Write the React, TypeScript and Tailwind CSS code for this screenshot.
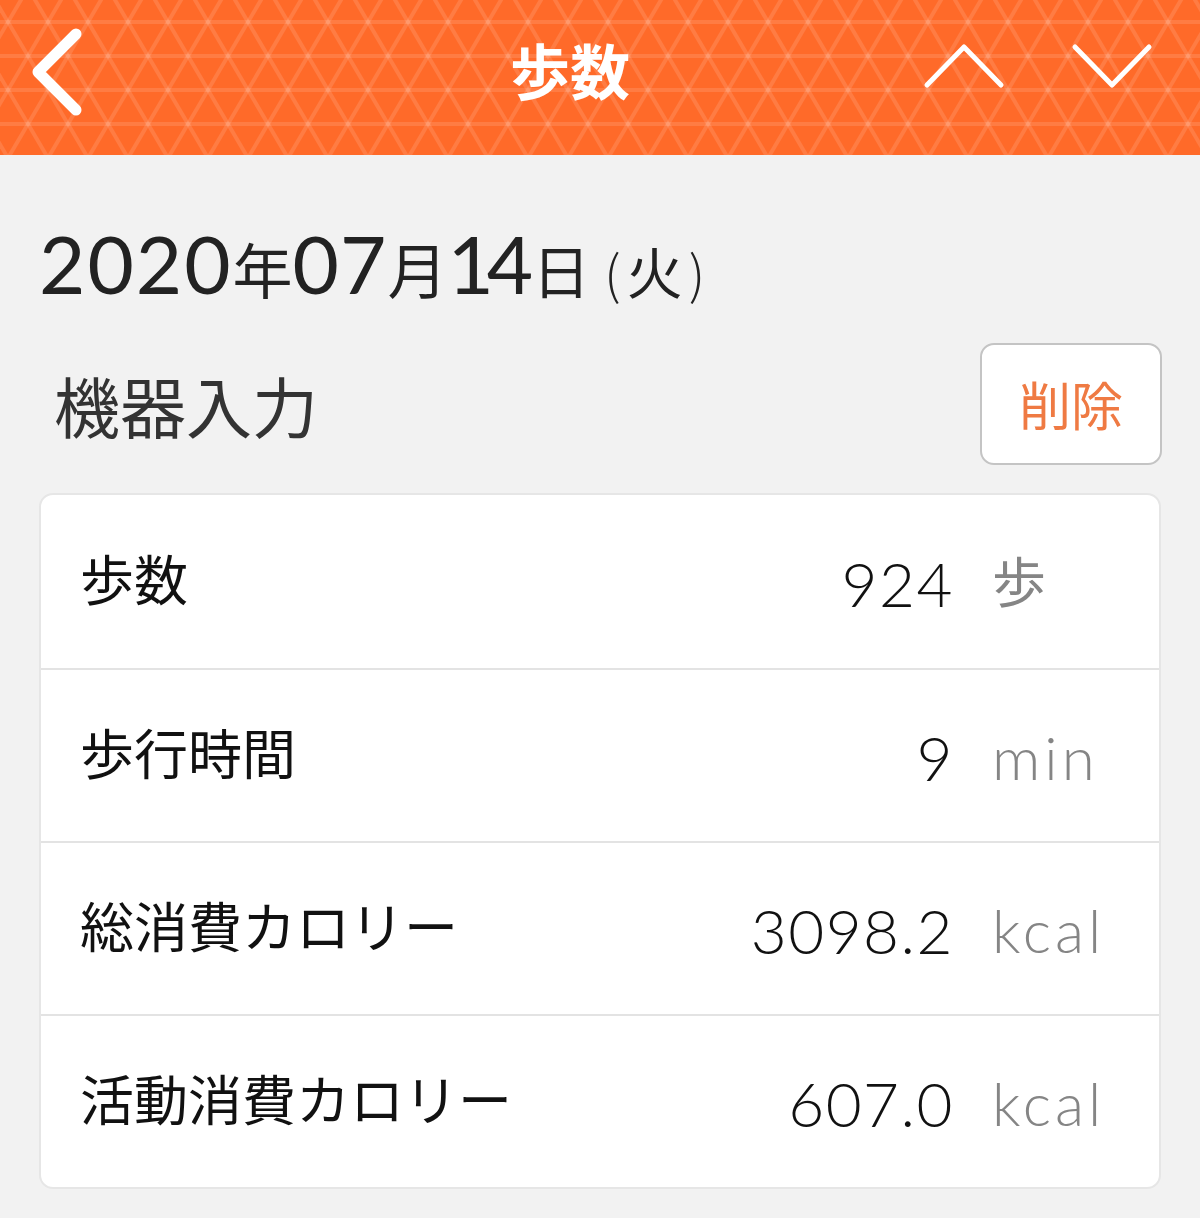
import React from "react";

function HeaderPattern() {
  const lines: React.ReactNode[] = [];
  const h = 34;
  const w = 40;
  for (let k = -1; k < 7; k++) {
    const y = 22 + h * k;
    lines.push(<line key={"h" + k} x1={0} y1={y} x2={1200} y2={y} />);
  }
  for (let n = -10; n < 42; n++) {
    const x0 = n * w + 8;
    const off = ((22 + 20) / h) * (w / 2);
    const dx = (200 / h) * (w / 2);
    lines.push(<line key={"p" + n} x1={x0 - off} y1={-20} x2={x0 - off + dx} y2={180} />);
    lines.push(<line key={"m" + n} x1={x0 + off} y1={-20} x2={x0 + off - dx} y2={180} />);
  }
  return (
    <svg className="absolute inset-0 h-full w-full" viewBox="0 0 1200 155" preserveAspectRatio="none">
      <g stroke="#ffffff" strokeOpacity={0.12} strokeWidth={4}>
        {lines}
      </g>
    </svg>
  );
}

type RowProps = { label: string; value: string; unit: string; unitJp?: boolean; first?: boolean };

function Row({ label, value, unit, unitJp, first }: RowProps) {
  return (
    <div className={first ? "flex h-[173px] items-center px-[39px]" : "flex h-[173px] items-center border-t-2 border-[#e3e3e3] px-[39px]"}>
      <div className="mb-[8px] flex-1 font-['Noto_Sans_CJK_JP',sans-serif] text-[54px] leading-none text-[#111111]">{label}</div>
      <div className="mt-[2px] text-right font-['Lato',sans-serif] text-[62px] font-light leading-none tracking-[1.5px] text-[#111111]">
        {value}
      </div>
      {unitJp ? (
        <div className="mb-[4px] ml-[38px] w-[128px] font-['Noto_Sans_CJK_JP',sans-serif] text-[54px] leading-none text-[#858585]">{unit}</div>
      ) : (
        <div className="ml-[38px] mt-[2px] w-[128px] font-['Lato',sans-serif] text-[60px] font-light leading-none tracking-[4px] text-[#858585]">
          {unit}
        </div>
      )}
    </div>
  );
}

export default function App() {
  return (
    <div className="min-h-[1218px] w-[1200px] bg-[#f2f2f2]">
      <header className="relative h-[155px] overflow-hidden bg-[#ff6a29]">
        <HeaderPattern />
        <div className="relative flex h-full items-center">
          <svg className="mb-[8px] ml-[24px] h-[100px] w-[70px]" viewBox="0 0 70 100">
            <polyline points="52,10 14,48 52,86" fill="none" stroke="#ffffff" strokeWidth={11} strokeLinecap="round" strokeLinejoin="round" />
          </svg>
          <div className="mb-[18px] ml-[416px] font-['Noto_Sans_CJK_JP',sans-serif] text-[60px] font-bold leading-none text-white">歩数</div>
          <div className="flex-1" />
          <svg className="mb-[22px] h-[60px] w-[90px]" viewBox="0 0 90 60">
            <polyline points="8,48 45,10 82,48" fill="none" stroke="#ffffff" strokeWidth={5} strokeLinecap="round" strokeLinejoin="round" />
          </svg>
          <svg className="mb-[22px] ml-[58px] mr-[43px] h-[60px] w-[90px]" viewBox="0 0 90 60">
            <polyline points="8,10 45,48 82,10" fill="none" stroke="#ffffff" strokeWidth={5} strokeLinecap="round" strokeLinejoin="round" />
          </svg>
        </div>
      </header>
      <main className="px-[39px]">
        <div className="flex items-baseline pt-[68px] text-[#222222]">
          <span className="font-['Lato',sans-serif] text-[80px] leading-none tracking-[2px]">2020</span>
          <span className="font-['Noto_Sans_CJK_JP',sans-serif] text-[60px] leading-none">年</span>
          <span className="font-['Lato',sans-serif] text-[80px] leading-none tracking-[1px]">07</span>
          <span className="font-['Noto_Sans_CJK_JP',sans-serif] text-[60px] leading-none">月</span>
          <span className="font-['Lato',sans-serif] text-[80px] leading-none tracking-[-7px]">14</span>
          <span className="ml-[6px] font-['Noto_Sans_CJK_JP',sans-serif] text-[58px] leading-none">日</span>
          <span className="ml-[14px] font-['Noto_Sans_CJK_JP',sans-serif] text-[52px] font-light leading-none">(</span>
          <span className="ml-[6px] font-['Noto_Sans_CJK_JP',sans-serif] text-[56px] leading-none">火</span>
          <span className="ml-[6px] font-['Noto_Sans_CJK_JP',sans-serif] text-[52px] font-light leading-none">)</span>
        </div>
        <div className="mt-[40px] flex items-center justify-between">
          <div className="ml-[15px] font-['Noto_Sans_CJK_JP',sans-serif] text-[66px] leading-none text-[#333333]">機器入力</div>
          <button className="mr-[-1px] flex h-[122px] w-[182px] items-center justify-center rounded-[14px] border-2 border-[#c4c4c4] bg-white font-['Noto_Sans_CJK_JP',sans-serif] text-[52px] leading-none text-[#ef7a43]">
            削除
          </button>
        </div>
        <div className="mt-[28px] overflow-hidden rounded-[14px] border-2 border-[#e6e6e6] bg-white">
          <Row first label="歩数" value="924" unit="歩" unitJp />
          <Row label="歩行時間" value="9" unit="min" />
          <Row label="総消費カロリー" value="3098.2" unit="kcal" />
          <Row label="活動消費カロリー" value="607.0" unit="kcal" />
        </div>
      </main>
    </div>
  );
}
